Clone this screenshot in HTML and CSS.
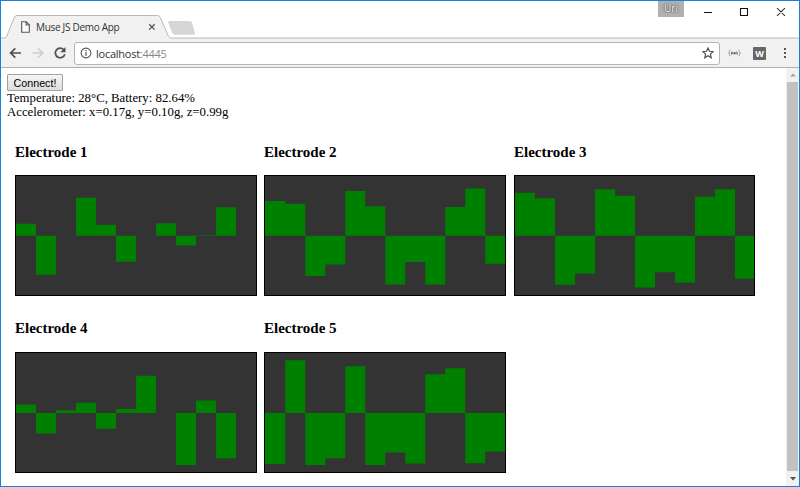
FILE: index.html
```html
<!DOCTYPE html>
<html lang="en">
<head>
<meta charset="utf-8">
<title>Muse JS Demo App</title>
<link rel="stylesheet" href="styles.css">
</head>
<body>
<div class="window">
  <header class="titlebar">
    <svg class="tabshape" width="798" height="38" viewBox="1 1 798 38">
      <path d="M1 38H5Q6 38 6.500 36.500L14.300 17.500Q15 15.500 17 15.500H157.500Q159.500 15.500 160.300 17.500L168.500 36.500Q169.200 38 171 38H799V39H1Z" fill="#f1f1f1"/>
      <path d="M1 38H4.500Q6 38 6.600 36.500L14.300 17.500Q15 15.500 17 15.500H157.500Q159.500 15.500 160.300 17.500L168.500 36.500Q169.200 38 171 38H799" fill="none" stroke="#b9b9b9"/>
      <path d="M169.500 21H190Q191.500 21 192 22.500L195 33Q195.500 34.800 194 34.800H175Q173 34.800 172.300 33L168.300 22.500Q168 21 169.500 21Z" fill="#d6d6d6"/>
    </svg>
    <div class="tab">
      <svg class="page-icon" width="9" height="12" viewBox="0 0 9 12"><path d="M.7.7H5.200L8.300 3.800V11.300H.7ZM5 .7V4H8.300" fill="#fff" stroke="#555" stroke-width="1.100"/></svg>
      <span class="title">Muse JS Demo App</span>
      <svg width="8" height="8" viewBox="0 0 8 8"><path d="M1.200 1.200L6.600 6.600M6.600 1.200L1.200 6.600" stroke="#555" stroke-width="1.300"/></svg>
    </div>
    <div class="controls">
      <span class="user">Uri</span>
      <svg width="84" height="16" viewBox="0 0 84 16"><path d="M4 8.500H12M40.500 4.500H47.500V11.500H40.500ZM77 4L85 12M85 4L77 12" fill="none" stroke="#111" stroke-width="1.050"/></svg>
    </div>
  </header>
  <nav class="toolbar">
    <svg class="nav" width="66" height="28" viewBox="0 0 66 28">
      <path d="M20 14H9.800M14.300 9.300L9.600 14L14.300 18.700" fill="none" stroke="#505050" stroke-width="1.700"/>
      <path d="M31.500 14H41.500M37 9.300L41.700 14L37 18.700" fill="none" stroke="#cdcdcd" stroke-width="1.600"/>
      <path d="M62.800 10.800A4.800 4.800 0 1 0 63.800 15.200" fill="none" stroke="#505050" stroke-width="1.700"/>
      <path d="M64.500 8V13.200H59.300Z" fill="#505050"/>
    </svg>
    <div class="address">
      <svg width="12" height="12" viewBox="0 0 12 12"><circle cx="6" cy="6" r="4.900" fill="none" stroke="#555" stroke-width="1.100"/><path d="M6 5.200V8.800M6 3V4.200" stroke="#555" stroke-width="1.300"/></svg>
      <span class="url">localhost<span class="port">:4445</span></span>
      <svg width="12" height="12" viewBox="0 0 12 12"><path d="M6 1L7.500 4.300L11.100 4.700L8.400 7.100L9.200 10.700L6 8.800L2.800 10.700L3.600 7.100L.9 4.700L4.500 4.300Z" fill="none" stroke="#505050" stroke-width="1.200"/></svg>
    </div>
    <svg class="ext" width="13" height="8" viewBox="0 0 13 8"><path d="M2.500 1Q1.500 1 1.500 2.500T.5 4Q1.500 4 1.500 5.500T2.500 7M10.500 1Q11.500 1 11.500 2.500T12.500 4Q11.500 4 11.500 5.500T10.500 7" fill="none" stroke="#888" stroke-width=".8"/><path d="M3.500 5.500V3Q5 2.500 5 5.500M8 5.500V3Q9.500 2.500 9.500 5.500" fill="none" stroke="#666" stroke-width=".9"/><circle cx="6.500" cy="4.200" r="1.100" fill="#666"/></svg>
    <span class="ext-w">W</span>
    <svg class="more" width="4" height="12" viewBox="0 0 4 12"><path d="M1 1H3V3H1ZM1 5H3V7H1ZM1 9H3V11H1Z" fill="#555"/></svg>
  </nav>
  <div class="viewport">
    <main>
      <button>Connect!</button>
      <p>Temperature: 28°C, Battery: 82.64%</p>
      <p>Accelerometer: x=0.17g, y=0.10g, z=0.99g</p>
      <div class="charts">
        <section><h3>Electrode 1</h3><svg class="chart" width="240" height="119"><path d="M0 59.700V47.700H20V98.700H40V59.700H60V21.700H80V48.700H100V85.700H120V59.700H140V47.200H160V69.500H180V59.200H200V31.300H220V59.700Z"/></svg></section>
        <section><h3>Electrode 2</h3><svg class="chart" width="240" height="119"><path transform="translate(.3)" d="M-1 59.700V25H20V27.700H40V100H60V88.600H80V15H100V30.300H120V108.600H140V86H160V108.600H180V31H200V12.400H220V87.700H240V59.700Z"/></svg></section>
        <section><h3>Electrode 3</h3><svg class="chart" width="239" height="119"><path d="M0 59.700V16.700H20V22.200H40V108.700H60V97.600H80V13.200H100V19.700H120V111.400H140V96.200H160V106.600H180V20.700H200V13.200H220V102.700H240V59.700Z"/></svg></section>
        <section class="second"><h3>Electrode 4</h3><svg class="chart" width="240" height="119"><path d="M0 60V51.500H20V80.500H40V57.200H60V49.700H80V75.800H100V56H120V22.700H140V60H160V112H180V47.500H200V105.300H220V60Z"/></svg></section>
        <section class="second"><h3>Electrode 5</h3><svg class="chart" width="240" height="119"><path transform="translate(.3)" d="M-1 60V111H20V7.200H40V112H60V105.200H80V13.200H100V112H120V99.500H140V110.600H160V21.200H180V15.200H200V110.200H220V98.500H240V60Z"/></svg></section>
      </div>
    </main>
    <div class="scrollbar">
      <svg width="12" height="14" viewBox="0 0 12 14"><path d="M3 8.500L6 5.500L9 8.500Z" fill="#a0a0a0"/></svg>
      <div class="thumb"></div>
      <svg width="12" height="15" viewBox="0 0 12 15"><path d="M3 6L6 9.500L9 6Z" fill="#505050"/></svg>
    </div>
  </div>
</div>
</body>
</html>
```
FILE: styles.css
```css
* { box-sizing: border-box; }
body { margin: 0; background: #fff; }
svg { display: block; flex: none; }
.window {
  width: 800px; height: 487px; border: 1px solid #1c80d4;
  display: flex; flex-direction: column; overflow: hidden;
}
.titlebar { position: relative; height: 38px; flex: none; display: flex; justify-content: space-between; }
.tabshape { position: absolute; left: 0; top: 0; }
.tab {
  position: relative; display: flex; align-items: center;
  margin: 15px 0 0 20px; width: 135px; height: 22px;
  font: 10px "Open Sans", sans-serif; color: #333;
}
.title { margin-left: 6px; flex: 1; white-space: nowrap; letter-spacing: -0.3px; }
.controls { position: relative; display: flex; height: 24px; padding-right: 15px; }
.controls svg { margin: 3px 0 0 16px; overflow: visible; }
.user {
  width: 26px; height: 16px; background: #b0b0b0; color: #fff;
  font: 10px/15px "Open Sans", sans-serif; text-align: center; text-shadow: 0 0 2px #222, 0 0 1px #444;
}
.toolbar {
  height: 29px; flex: none; display: flex; align-items: center;
  background: #f1f1f1; border-bottom: 1px solid #b0b0b0;
}
.address {
  display: flex; align-items: center; margin-left: 7px; padding: 0 5px 0 5px;
  width: 646px; height: 23px; background: #fff; border: 1px solid #b5b5b5; border-radius: 3px;
}
.url { flex: 1; margin-left: 4px; font: 11px "Open Sans", sans-serif; letter-spacing: -0.25px; color: #333; }
.port { color: #888; }
.ext { margin-left: 8px; }
.ext-w {
  width: 13px; height: 13px; margin-left: 12px; border-radius: 1px; background: #666; color: #fff;
  font: bold 9px/13px "Open Sans", sans-serif; text-align: center;
}
.more { margin-left: 17px; }
.viewport { flex: 1; min-height: 0; display: flex; }
main { flex: 1; padding: 6px 0 0 6px; font: 12.8px/14px "Liberation Serif", serif; color: #000; }
button {
  display: block; width: 56px; height: 17px; padding: 0;
  border: 1px solid #a2a2a2; border-radius: 1px; background: linear-gradient(#f5f5f5, #dedede);
  font: 10.7px/14px "Liberation Sans", sans-serif; color: #000;
}
p { margin: 0; height: 14px; white-space: nowrap; }
.charts {
  display: grid; grid-template-columns: 249px 250px 242px;
  grid-template-rows: 177px 122px; margin: 24px 0 0 8px;
}
h3 { margin: 0 0 14px; font: bold 15px/18px "Liberation Serif", serif; }
.second h3 { line-height: 16px; margin-bottom: 16px; }
.chart { box-sizing: content-box; border: 1px solid #000; background: #333; }
.chart path { fill: #008000; }
.scrollbar { width: 13px; display: flex; flex-direction: column; background: #f1f1f1; padding-left: 1px; }
.thumb { flex: 1; width: 11px; background: #c1c1c1; }
```
